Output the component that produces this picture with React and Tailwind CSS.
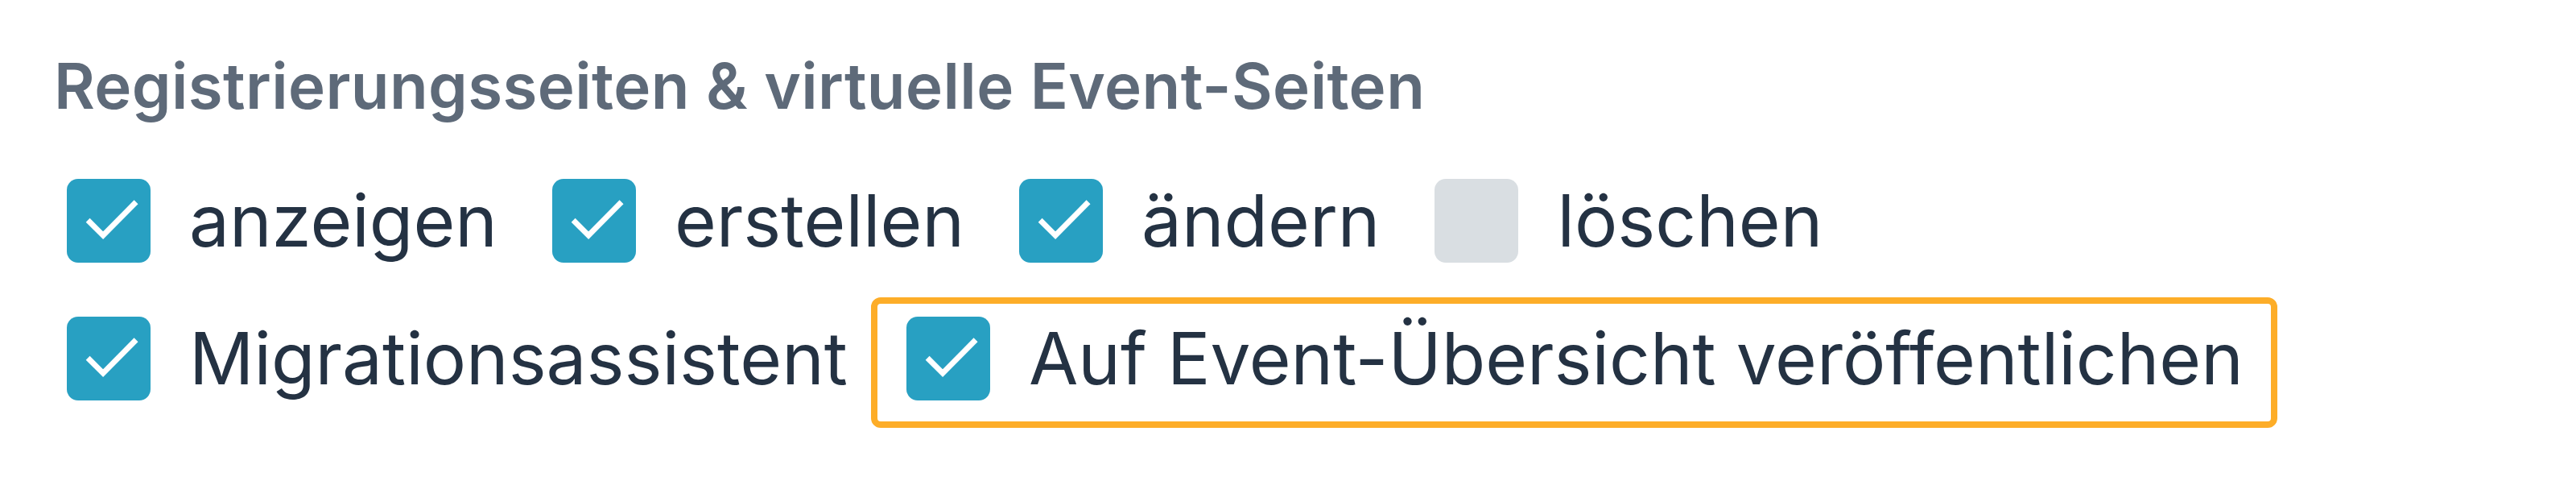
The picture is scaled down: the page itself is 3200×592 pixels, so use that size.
function Box({ checked }) {
  if (!checked) {
    return <div className="w-[104px] h-[104px] rounded-[14px] bg-[#d9dee2] shrink-0" />;
  }
  return (
    <div className="w-[104px] h-[104px] rounded-[14px] bg-[#28a0c2] shrink-0 flex items-center justify-center">
      <svg viewBox="0 0 24 24" className="w-[104px] h-[104px]" fill="none" stroke="#fff" strokeWidth="1.6" strokeLinecap="square">
        <path d="M6.6 12.4 10.4 16.2 19.3 7.2" />
      </svg>
    </div>
  );
}

function Item({ checked, label }) {
  return (
    <div className="flex items-center gap-[48px] h-[104px]">
      <Box checked={checked} />
      <span className="text-[89px] leading-[104px] text-[#243243] whitespace-nowrap">{label}</span>
    </div>
  );
}

export default function App() {
  return (
    <div className="w-[3200px] h-[592px] bg-white font-['Inter',sans-serif]">
      <div className="pt-[68px] pl-[67px]">
        <h2 className="text-[78px] leading-[77px] font-semibold tracking-[0.4px] text-[#5e6a79] whitespace-nowrap">
          Registrierungsseiten &amp; virtuelle Event-Seiten
        </h2>
      </div>
      <div className="pl-[83px] pt-[77px]">
        <div className="flex items-center gap-[68px]">
          <Item checked label="anzeigen" />
          <Item checked label="erstellen" />
          <Item checked label="ändern" />
          <Item checked={false} label="löschen" />
        </div>
        <div className="flex items-start mt-[43px]">
          <div className="mt-[24px]">
            <Item checked label="Migrationsassistent" />
          </div>
          <div className="ml-[29px] border-[8px] border-[#fdad28] rounded-[12px] pl-[36px] pr-[34px] pt-[16px] pb-[26px]">
            <Item checked label="Auf Event-Übersicht veröffentlichen" />
          </div>
        </div>
      </div>
    </div>
  );
}
